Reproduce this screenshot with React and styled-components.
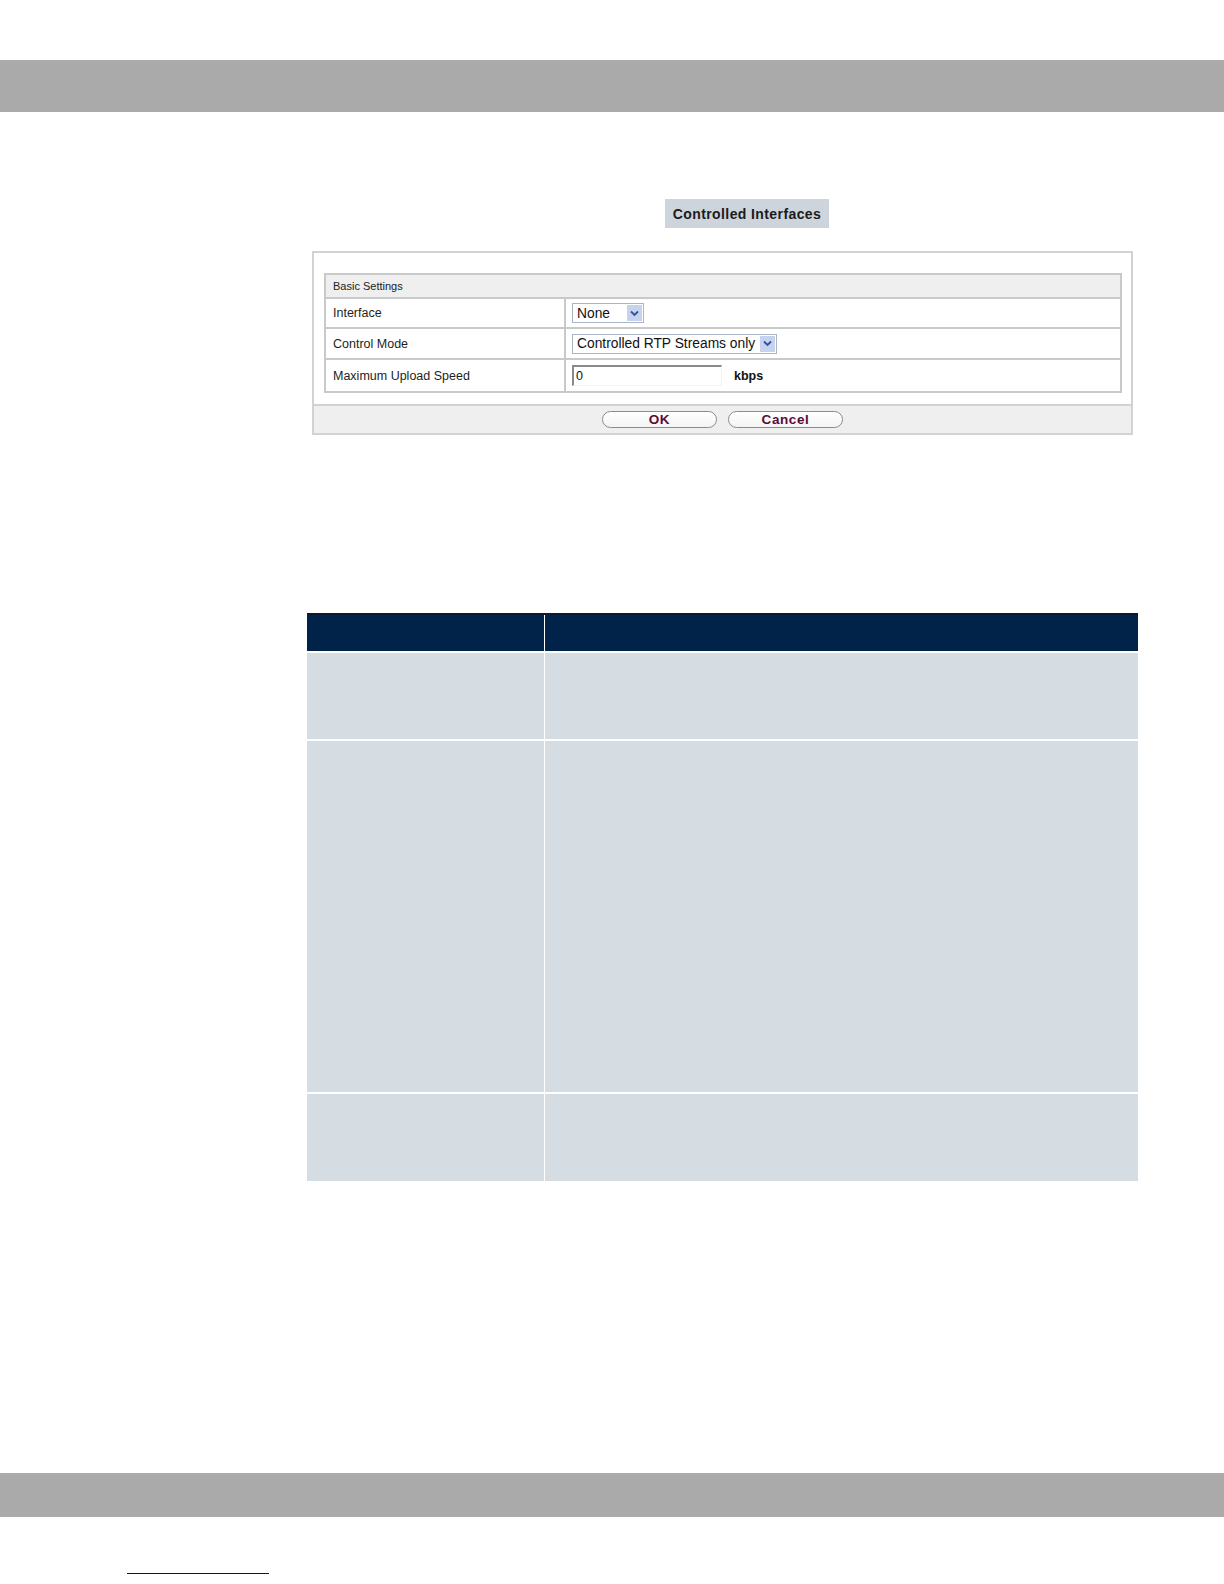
import React from 'react'
import styled, { createGlobalStyle } from 'styled-components'

const GlobalStyle = createGlobalStyle`
  html, body {
    margin: 0;
    padding: 0;
    background: #ffffff;
  }
  body {
    font-family: "Liberation Sans", Arial, sans-serif;
    color: #000;
  }
`

const Page = styled.div`
  width: 1224px;
  height: 1584px;
  overflow: hidden;
  padding-top: 60px;
  box-sizing: border-box;
`

const GreyBar = styled.div`
  height: ${(p) => p.h}px;
  background: #aaaaaa;
`

const Spacer = styled.div`
  height: ${(p) => p.h}px;
`

const Content = styled.div`
  margin-left: 307px;
  width: 831px;
`

const TitleRow = styled.div`
  padding: 87px 0 0 358px;
`

const Title = styled.div`
  display: inline-flex;
  align-items: center;
  justify-content: center;
  width: 164px;
  height: 29px;
  background: #cdd4dc;
  font-size: 14px;
  font-weight: bold;
  letter-spacing: 0.4px;
  color: #1b1b1b;
`

const Panel = styled.div`
  margin: 23px 0 0 5px;
  width: 821px;
  border: 2px solid #d2d2d2;
  box-sizing: border-box;
  background: #fff;
`

const PanelBody = styled.div`
  padding: 20px 9px 11px 10px;
`

const SettingsTable = styled.div`
  display: grid;
  grid-template-columns: 238px 1fr;
  background: #c9c9c9;
  border: 2px solid #c9c9c9;
  gap: 2px;
`

const SectionHead = styled.div`
  grid-column: 1 / -1;
  height: 22px;
  background: #efefef;
  display: flex;
  align-items: center;
  padding-left: 7px;
  font-size: 11px;
  color: #222;
`

const Label = styled.div`
  background: #fff;
  height: ${(p) => p.h}px;
  display: flex;
  align-items: center;
  padding-left: 7px;
  font-size: 12.5px;
  color: #1e1e1e;
`

const Value = styled.div`
  background: #fff;
  height: ${(p) => p.h}px;
  display: flex;
  align-items: center;
  padding-left: 6px;
  gap: 12px;
`

const SelectBox = styled.div`
  width: ${(p) => p.w}px;
  height: 20px;
  box-sizing: border-box;
  border: 1px solid #a9b4c4;
  background: #fff;
  display: flex;
  align-items: center;
  justify-content: space-between;
  padding: 0 1px 0 4px;
  font-size: 13.8px;
  color: #111;
`

const Arrow = styled.span`
  width: 15px;
  height: 16px;
  background: #c6d3ef;
  display: flex;
  align-items: center;
  justify-content: center;
`

const TextInput = styled.div`
  width: 150px;
  height: 21px;
  box-sizing: border-box;
  border-top: 2px solid #8a8a8a;
  border-left: 2px solid #8a8a8a;
  border-right: 1px solid #f2f2f2;
  border-bottom: 1px solid #f2f2f2;
  padding-left: 2px;
  font-size: 12.5px;
  display: flex;
  align-items: center;
  color: #111;
`

const Unit = styled.span`
  font-size: 12.5px;
  font-weight: bold;
  color: #111;
`

const Footer = styled.div`
  height: 27px;
  background: #efefef;
  border-top: 2px solid #d2d2d2;
  display: flex;
  align-items: center;
  padding-left: 288px;
  gap: 11px;
`

const PillButton = styled.div`
  width: 115px;
  height: 17px;
  box-sizing: border-box;
  border: 1px solid #8c8c8c;
  border-radius: 9px;
  background: linear-gradient(#ffffff, #f4f4f4);
  display: flex;
  align-items: center;
  justify-content: center;
  font-size: 13.5px;
  font-weight: bold;
  letter-spacing: 0.6px;
  color: #5a0b3b;
`

const InfoTable = styled.div`
  margin-top: 178px;
  display: grid;
  grid-template-columns: 237px 1fr;
  row-gap: 2px;
  column-gap: 1px;
  background: #ffffff;
  border-top: 2px solid #0b1a33;
`

const HeadCell = styled.div`
  height: 36px;
  background: #012249;
`

const Cell = styled.div`
  height: ${(p) => p.h}px;
  background: #d6dde2;
`

const FootLink = styled.div`
  margin: 56px 0 0 127px;
  width: 142px;
  border-bottom: 1px solid #0c0c7a;
`

const ChevronDown = () => (
  <svg width="9" height="7" viewBox="0 0 9 7">
    <path d="M1 1.5 L4.5 5 L8 1.5" fill="none" stroke="#33509a" strokeWidth="1.8" />
  </svg>
)

const Select = ({ w, children }) => (
  <SelectBox w={w}>
    <span>{children}</span>
    <Arrow><ChevronDown /></Arrow>
  </SelectBox>
)

const App = () => (
  <Page>
    <GlobalStyle />
    <GreyBar h={52} />
    <Content>
      <TitleRow>
        <Title>Controlled Interfaces</Title>
      </TitleRow>
      <Panel>
        <PanelBody>
          <SettingsTable>
            <SectionHead>Basic Settings</SectionHead>
            <Label h={28}>Interface</Label>
            <Value h={28}><Select w={72}>None</Select></Value>
            <Label h={29}>Control Mode</Label>
            <Value h={29}><Select w={205}>Controlled RTP Streams only</Select></Value>
            <Label h={31}>Maximum Upload Speed</Label>
            <Value h={31}>
              <TextInput>0</TextInput>
              <Unit>kbps</Unit>
            </Value>
          </SettingsTable>
        </PanelBody>
        <Footer>
          <PillButton>OK</PillButton>
          <PillButton>Cancel</PillButton>
        </Footer>
      </Panel>
      <InfoTable>
        <HeadCell />
        <HeadCell />
        <Cell h={86} />
        <Cell h={86} />
        <Cell h={351} />
        <Cell h={351} />
        <Cell h={87} />
        <Cell h={87} />
      </InfoTable>
    </Content>
    <Spacer h={292} />
    <GreyBar h={44} />
    <FootLink />
  </Page>
)

export default App
